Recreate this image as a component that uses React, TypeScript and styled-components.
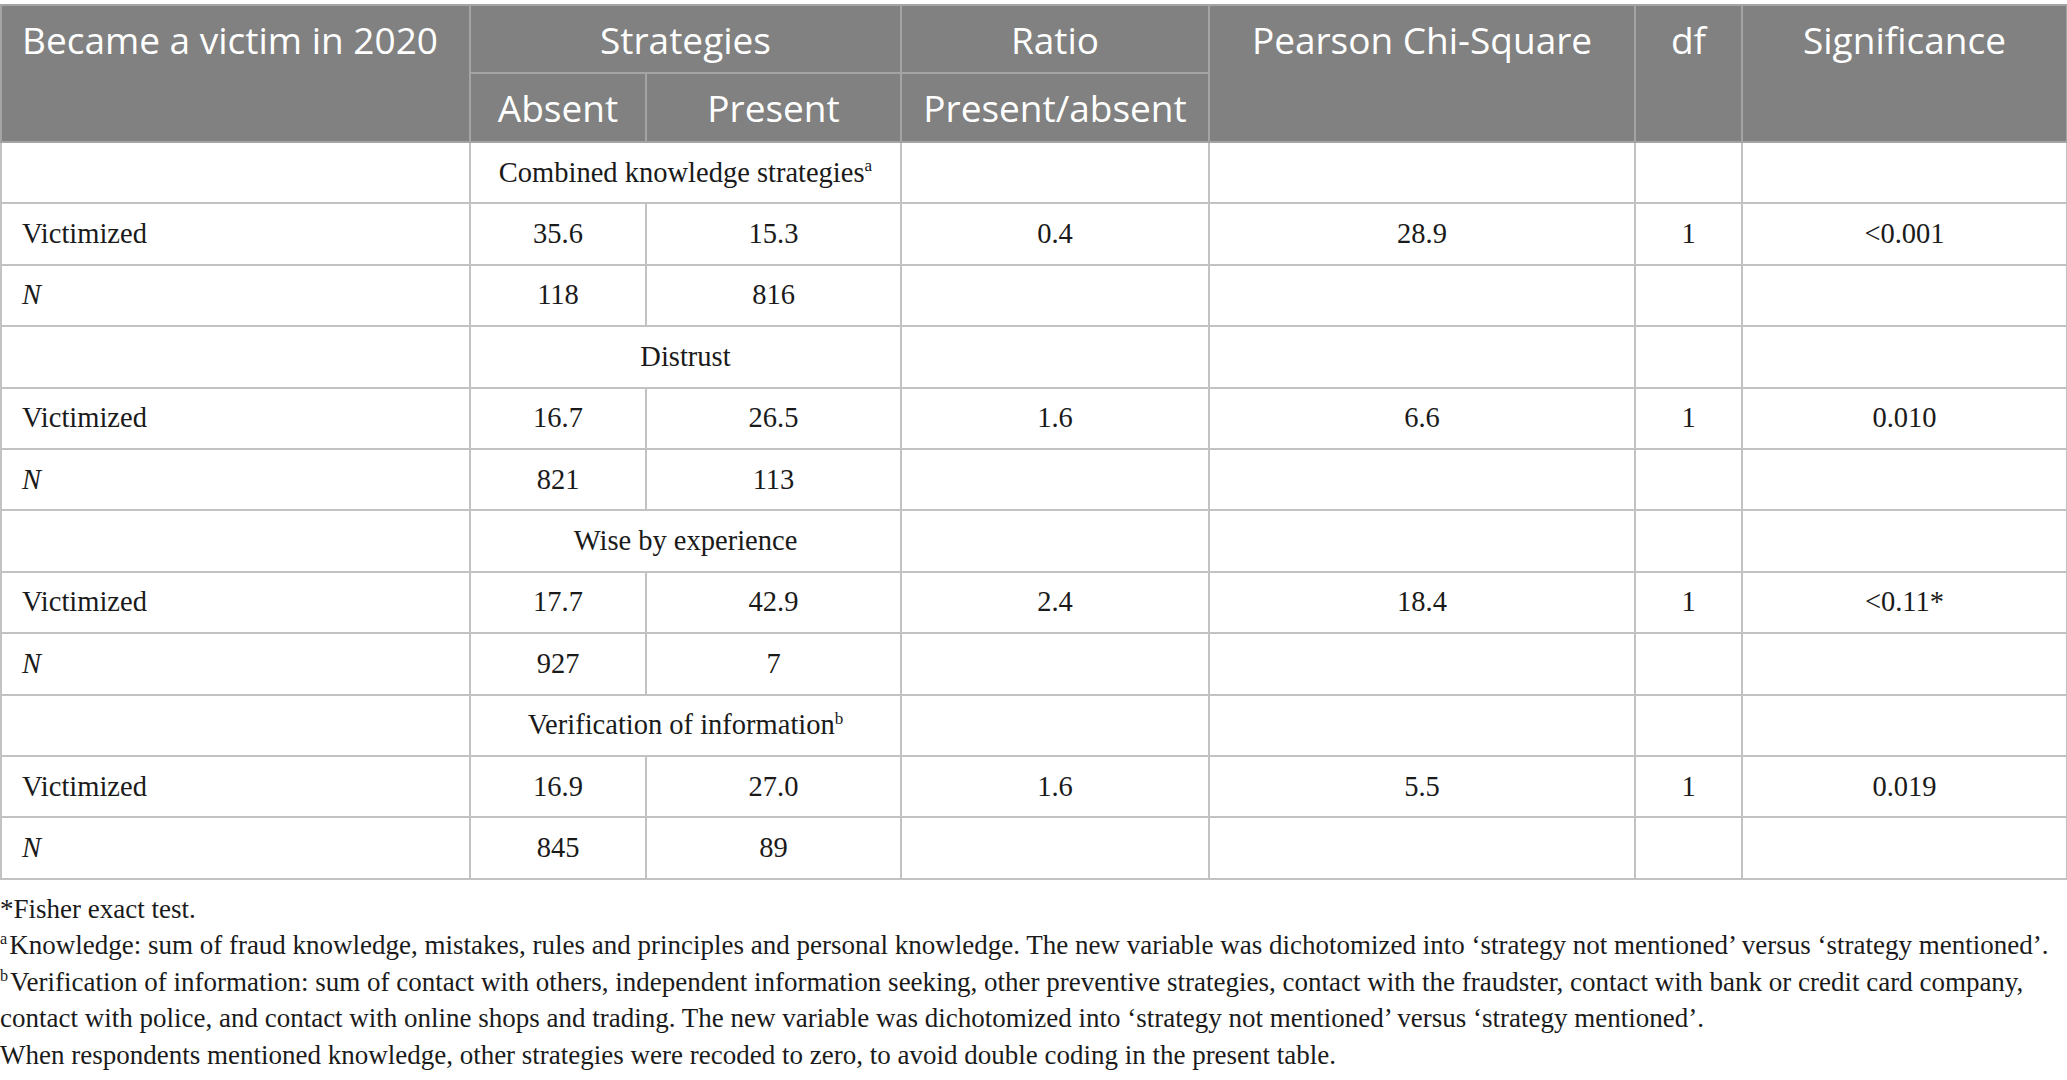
import { createGlobalStyle, styled } from 'styled-components';

const GlobalStyle = createGlobalStyle`
    html, body {
        margin: 0;
        padding: 0;
        background: #ffffff;
    }
    body {
        font-family: "Liberation Serif", "Times New Roman", serif;
        color: #1a1a1a;
    }
`;

const Page = styled.div`
    width: 2067px;
    padding-top: 4px;
`;

const Table = styled.table`
    width: 2067px;
    table-layout: fixed;
    border-collapse: collapse;
    border: 2px solid #b8b8b8;
`;

const HeadCell = styled.th<{ $left?: boolean; $top?: boolean }>`
    background: #808180;
    color: #ffffff;
    font-family: "Open Sans", "Noto Sans", sans-serif;
    font-weight: 400;
    font-size: 37px;
    line-height: 44px;
    border: 2px solid #a3a4a3;
    text-align: ${(p) => (p.$left ? 'left' : 'center')};
    vertical-align: ${(p) => (p.$top ? 'top' : 'middle')};
    padding: ${(p) => (p.$top ? '12px' : '0')} ${(p) => (p.$left ? '20px' : '0')} 0;
    white-space: nowrap;
`;

const HeadRow = styled.tr<{ $h: number }>`
    height: ${(p) => p.$h}px;
`;

const Row = styled.tr`
    height: 61.4px;
`;

const Cell = styled.td<{ $left?: boolean }>`
    border: 2px solid #c2c2c2;
    font-size: 28.5px;
    line-height: 34px;
    text-align: ${(p) => (p.$left ? 'left' : 'center')};
    padding: 0 ${(p) => (p.$left ? '20px' : '0')};
    vertical-align: middle;
    white-space: nowrap;
`;

const Italic = styled.i`
    font-style: italic;
`;

const Sup = styled.sup<{ $gap?: boolean }>`
    display: inline-block;
    font-size: 0.6em;
    line-height: 1;
    vertical-align: 0.6em;
    margin-right: ${(p) => (p.$gap ? '2px' : '0')};
`;

const Notes = styled.div`
    margin-top: 11px;
    font-size: 27px;
    line-height: 36.5px;
    color: #1a1a1a;
`;

const Note = styled.p`
    margin: 0;
`;

const widths = [469, 176, 255, 308, 426, 107, 325];

type Group = {
    title: React.ReactNode;
    victim: [string, string, string, string, string, string];
    n: [string, string];
};

const groups: Group[] = [
    {
        title: <>Combined knowledge strategies<Sup>a</Sup></>,
        victim: ['35.6', '15.3', '0.4', '28.9', '1', '<0.001'],
        n: ['118', '816'],
    },
    {
        title: 'Distrust',
        victim: ['16.7', '26.5', '1.6', '6.6', '1', '0.010'],
        n: ['821', '113'],
    },
    {
        title: 'Wise by experience',
        victim: ['17.7', '42.9', '2.4', '18.4', '1', '<0.11*'],
        n: ['927', '7'],
    },
    {
        title: <>Verification of information<Sup>b</Sup></>,
        victim: ['16.9', '27.0', '1.6', '5.5', '1', '0.019'],
        n: ['845', '89'],
    },
];

export default function App() {
    return (
        <Page>
            <GlobalStyle />
            <Table>
                <colgroup>
                    {widths.map((w, i) => (
                        <col key={i} style={{ width: w }} />
                    ))}
                </colgroup>
                <thead>
                    <HeadRow $h={68}>
                        <HeadCell rowSpan={2} $left $top>Became a victim in 2020</HeadCell>
                        <HeadCell colSpan={2} $top>Strategies</HeadCell>
                        <HeadCell $top>Ratio</HeadCell>
                        <HeadCell rowSpan={2} $top>Pearson Chi-Square</HeadCell>
                        <HeadCell rowSpan={2} $top>df</HeadCell>
                        <HeadCell rowSpan={2} $top>Significance</HeadCell>
                    </HeadRow>
                    <HeadRow $h={69}>
                        <HeadCell>Absent</HeadCell>
                        <HeadCell>Present</HeadCell>
                        <HeadCell>Present/absent</HeadCell>
                    </HeadRow>
                </thead>
                <tbody>
                    {groups.map((g, i) => (
                        <>
                            <Row key={`t${i}`}>
                                <Cell />
                                <Cell colSpan={2}>{g.title}</Cell>
                                <Cell />
                                <Cell />
                                <Cell />
                                <Cell />
                            </Row>
                            <Row key={`v${i}`}>
                                <Cell $left>Victimized</Cell>
                                {g.victim.map((v, j) => (
                                    <Cell key={j}>{v}</Cell>
                                ))}
                            </Row>
                            <Row key={`n${i}`}>
                                <Cell $left><Italic>N</Italic></Cell>
                                <Cell>{g.n[0]}</Cell>
                                <Cell>{g.n[1]}</Cell>
                                <Cell />
                                <Cell />
                                <Cell />
                                <Cell />
                            </Row>
                        </>
                    ))}
                </tbody>
            </Table>
            <Notes>
                <Note>*Fisher exact test.</Note>
                <Note><Sup $gap>a</Sup>Knowledge: sum of fraud knowledge, mistakes, rules and principles and personal knowledge. The new variable was dichotomized into ‘strategy not mentioned’ versus ‘strategy mentioned’.</Note>
                <Note><Sup $gap>b</Sup>Verification of information: sum of contact with others, independent information seeking, other preventive strategies, contact with the fraudster, contact with bank or credit card company, contact with police, and contact with online shops and trading. The new variable was dichotomized into ‘strategy not mentioned’ versus ‘strategy mentioned’.</Note>
                <Note>When respondents mentioned knowledge, other strategies were recoded to zero, to avoid double coding in the present table.</Note>
            </Notes>
        </Page>
    );
}
